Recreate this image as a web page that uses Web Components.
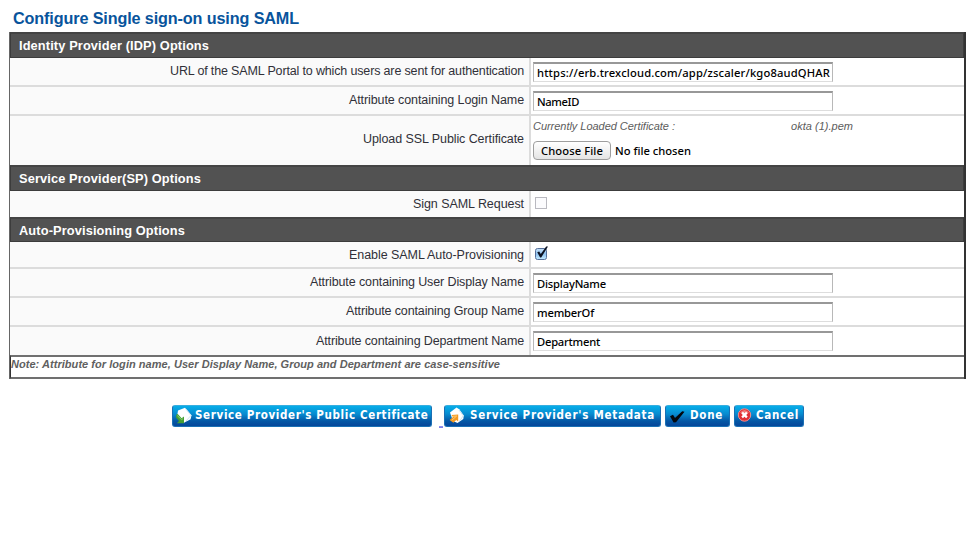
<!DOCTYPE html>
<html lang="en"><head><meta charset="utf-8"><title>Configure Single sign-on using SAML</title>
<style>
body{margin:0;width:968px;height:533px;background:#fff;overflow:hidden;font:12.5px "Liberation Sans",Arial,sans-serif;color:#303038}
</style></head><body>
<saml-page></saml-page>
<script>
// Single line of text whose tracking is adjusted to fill the width given in "w".
customElements.define('fit-text', class extends HTMLElement{
  connectedCallback(){
    const r=this.attachShadow({mode:'open'});
    r.innerHTML='<style>:host{display:inline-block;white-space:nowrap}span{display:inline-block}</style><span><slot></slot></span>';
    const w=+this.getAttribute('w'), s=r.querySelector('span');
    const n=this.textContent.length;
    const nat=s.getBoundingClientRect().width;
    s.style.letterSpacing=((w-nat)/n).toFixed(3)+'px';
    this.style.width=w+'px';
  }
});
customElements.define('section-bar', class extends HTMLElement{
  connectedCallback(){
    this.attachShadow({mode:'open'}).innerHTML=`<style>
    :host{display:flex;align-items:center;box-sizing:border-box;padding:0 0 0 8px;background:#525252;border:1px solid #3c3c3c;border-top:2px solid #444;color:#fff;font-weight:bold;font-size:12.8px;line-height:15px}
    </style><slot></slot>`;
  }
});
customElements.define('form-row', class extends HTMLElement{
  connectedCallback(){
    this.attachShadow({mode:'open'}).innerHTML=`<style>
    :host{display:grid;grid-template-columns:519px 2px 1fr;box-sizing:border-box;border-bottom:2px solid #dcdcdc;background:#fff}
    :host([last]){border-bottom:0}
    .l{background:#fafafa;display:flex;justify-content:flex-end;align-items:center;padding:0 5px 0 0}
    :host([up]) .l{padding-bottom:1px}
    :host([upload]) .l{padding-bottom:3px}
    .d{background:#dcdcdc}.c{padding-left:2px;min-width:0}
    </style><div class="l"><slot name="label"></slot></div><div class="d"></div><div class="c"><slot></slot></div>`;
  }
});
customElements.define('text-field', class extends HTMLElement{
  connectedCallback(){
    this.attachShadow({mode:'open'}).innerHTML=`<style>
    :host{display:flex;align-items:center;box-sizing:border-box;width:300px;height:20px;margin-top:4px;padding:0 0 1px 3px;border:1px solid #b8b8b8;border-top:2px solid #989898;border-bottom-color:#ddd;background:#fff;color:#000;font:500 11.2px "Noto Sans",sans-serif;line-height:15px;overflow:hidden}
    </style><slot></slot>`;
  }
});
customElements.define('check-box', class extends HTMLElement{
  connectedCallback(){
    const on=this.hasAttribute('checked');
    this.attachShadow({mode:'open'}).innerHTML=`<style>:host{display:block;height:18px}svg{display:block}</style>
    <svg width="18" height="18"><defs><linearGradient id="g" x2="0" y2="1"><stop stop-color="#c9e2f8"/><stop offset=".5" stop-color="#8fc2f0"/><stop offset="1" stop-color="#c4ebff"/></linearGradient></defs>`+
    (on?`<rect x="2.5" y="4.5" width="11" height="11" rx="2" fill="url(#g)" stroke="#56709b"/><path d="M4.2 8.2 6.2 7.5 7.8 10 13.2 2.5 15 2.6 8.2 13.5 7.1 13.4Z" fill="#0a1020"/>`
      :`<rect x="2.5" y="4.5" width="11" height="11" fill="#fbfbfd" stroke="#b9b9c0"/>`)+'</svg>';
  }
});
const ICONS={
 cert:'<path d="M5 4.5 12 1.8 18.5 9.2 17.6 13.2 11 16.8 4 11Z" fill="#fff"/><path d="M13 3.2 18 9.5 12.5 15.5" stroke="#cfe5f0" fill="none"/><path d="M3.4 8.4 4.8 8 8.6 12.2 11 10.5 11 17.2 3.8 17.2 6 15 3 11.4Z" fill="#459f35"/><path d="M4.3 9.6 8.5 13.6 10 12.6" stroke="#8bd070" fill="none"/>',
 meta:'<path d="M5 6.5 11.5 1.5 14.2 3.2 18.8 9.5 18.3 13 12.5 17 8 15Z" fill="#fff"/><path d="M14 4 18.2 9.8 14.6 15" stroke="#cfe5f0" fill="none"/><path d="M6.4 9 13.2 8.4 13.2 15.6 11.2 14 8.4 16.8 4.6 14 8 11Z" fill="#f39a22"/><path d="M8 10.3 11.7 10 6.8 14.2" stroke="#ffc871" fill="none"/>',
 done:'<path d="M4 10.2 7 8.8 9 12 16.2 5.2 18.5 5.8 10 16.2 7.6 16.4Z" fill="#04080d"/>',
 cancel:'<circle cx="9.5" cy="9" r="6.2" fill="#df3035" stroke="#f38c8d"/><path d="M5 6.5Q9.5 1.5 14 6.5Q9.5 9 5 6.5" fill="#f37b78"/><path d="M7.1 6.6 11.9 11.4M11.9 6.6 7.1 11.4" stroke="#fff" stroke-width="2.3"/>'
};
customElements.define('action-button', class extends HTMLElement{
  connectedCallback(){
    this.attachShadow({mode:'open'}).innerHTML=`<style>
    :host{display:flex;align-items:center;box-sizing:border-box;height:22px;border-radius:3px;border:1px solid #1a70b4;border-top-color:#37aee0;background:linear-gradient(#06aee9,#078bd0 40%,#0457a5 75%,#05469a);color:#fff;font:bold 11.5px "DejaVu Sans Condensed","DejaVu Sans",sans-serif;font-stretch:condensed}
    svg{flex:none}.t{margin-left:calc(var(--gap,1px) + 1px);margin-top:-2px}
    </style><svg width="20" height="20">${ICONS[this.getAttribute('icon')]}</svg><div class="t"><slot></slot></div>`;
  }
});
customElements.define('saml-page', class extends HTMLElement{
  connectedCallback(){
    this.attachShadow({mode:'open'}).innerHTML=`<style>
    :host{display:block}
    h1{margin:0;padding:9px 0 0 13px;height:23px;font-size:16.2px;line-height:18px;color:#08549c}
    .table{margin-left:9px;width:957px;box-sizing:border-box;border-left:1px solid #666;border-right:2px solid #333}
    .note{box-sizing:border-box;height:24px;border:2px solid #707070;border-left:1px solid #333;border-right:0;padding-left:0;color:#606060;font:italic bold 11px/14px "Liberation Sans",sans-serif}
    .cert{display:flex;justify-content:space-between;width:320px;height:21px;line-height:20px;color:#5c5c5c;font-style:italic;font-size:11px}
    .file{display:flex;align-items:center;color:#000;font:500 11.2px "Noto Sans",sans-serif;height:18px;margin-top:4px}
    .pick{box-sizing:border-box;width:78px;height:19px;border:1px solid #9e9e9e;border-radius:4px;background:linear-gradient(#fff,#f2f2f2 50%,#e4e4e4);display:flex;align-items:center;justify-content:center;margin-right:4px}
    .buttons{display:flex;padding:26px 0 0 172px}
    .link{width:4px;height:2px;background:linear-gradient(#9999f5,#7777df);margin:21px 1px 0 7px}
    </style>
    <h1><fit-text w="286">Configure Single sign-on using SAML</fit-text></h1>
    <div class="table">
     <section-bar style="height:26px"><fit-text w="190">Identity Provider (IDP) Options</fit-text></section-bar>
     <form-row up style="height:29px"><fit-text slot="label" w="354">URL of the SAML Portal to which users are sent for authentication</fit-text><text-field><fit-text w="293">https://erb.trexcloud.com/app/zscaler/kgo8audQHAR</fit-text></text-field></form-row>
     <form-row up style="height:29px"><fit-text slot="label" w="175">Attribute containing Login Name</fit-text><text-field><fit-text w="42">NameID</fit-text></text-field></form-row>
     <form-row last upload style="height:49px"><fit-text slot="label" w="161">Upload SSL Public Certificate</fit-text>
       <div class="cert"><fit-text w="142">Currently Loaded Certificate :</fit-text><fit-text w="62">okta (1).pem</fit-text></div>
       <div class="file"><div class="pick"><fit-text w="62">Choose File</fit-text></div><fit-text w="76">No file chosen</fit-text></div></form-row>
     <section-bar style="height:26px"><fit-text w="182">Service Provider(SP) Options</fit-text></section-bar>
     <form-row last style="height:26px"><fit-text slot="label" w="111">Sign SAML Request</fit-text><check-box style="margin-top:2px"></check-box></form-row>
     <section-bar style="height:25px"><fit-text w="166">Auto-Provisioning Options</fit-text></section-bar>
     <form-row style="height:27px"><fit-text slot="label" w="175">Enable SAML Auto-Provisioning</fit-text><check-box checked style="margin-top:2px"></check-box></form-row>
     <form-row up style="height:29px"><fit-text slot="label" w="214">Attribute containing User Display Name</fit-text><text-field><fit-text w="69">DisplayName</fit-text></text-field></form-row>
     <form-row up style="height:29px"><fit-text slot="label" w="178">Attribute containing Group Name</fit-text><text-field><fit-text w="57">memberOf</fit-text></text-field></form-row>
     <form-row last up style="height:28px"><fit-text slot="label" w="208">Attribute containing Department Name</fit-text><text-field><fit-text w="63">Department</fit-text></text-field></form-row>
     <div class="note"><fit-text w="489">Note: Attribute for login name, User Display Name, Group and Department are case-sensitive</fit-text></div>
    </div>
    <div class="buttons">
     <action-button icon="cert" style="width:260px"><fit-text w="233">Service Provider's Public Certificate</fit-text></action-button>
     <div class="link"></div>
     <action-button icon="meta" style="width:217px;--gap:4px"><fit-text w="185">Service Provider's Metadata</fit-text></action-button>
     <action-button icon="done" style="width:65px;margin-left:4px;--gap:3px"><fit-text w="33">Done</fit-text></action-button>
     <action-button icon="cancel" style="width:70px;margin-left:4px;--gap:0px"><fit-text w="43">Cancel</fit-text></action-button>
    </div>`;
  }
});
</script></body></html>
